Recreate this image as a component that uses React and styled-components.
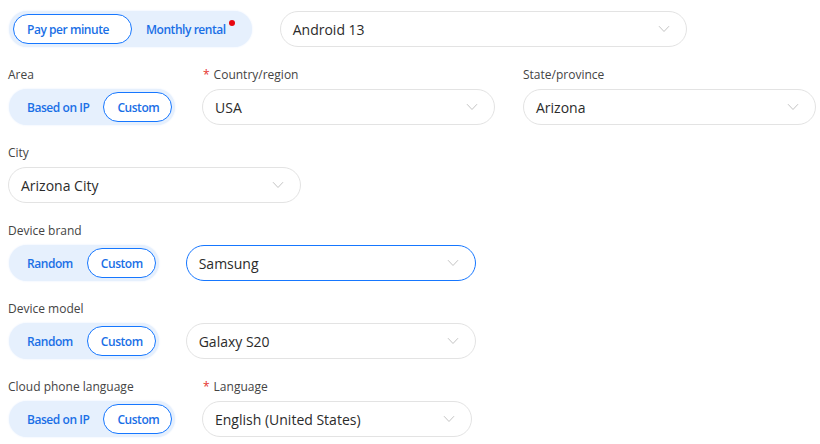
import React from "react";
import styled, { createGlobalStyle } from "styled-components";

const Global = createGlobalStyle`
  body {
    margin: 0;
    background: #fff;
    font-family: "Open Sans", "Noto Sans", sans-serif;
  }
`;

const Page = styled.div`
  width: 820px;
  height: 444px;
  box-sizing: border-box;
  padding: 11px 8px 0 8px;
  display: flex;
  flex-direction: column;
  gap: 18px;
  overflow: hidden;
`;

const Row = styled.div`
  display: flex;
  align-items: flex-end;
  gap: ${(p) => p.$gap ?? 28}px;
`;

const Field = styled.div`
  display: flex;
  flex-direction: column;
  gap: 4px;
  width: ${(p) => (p.$width ? `${p.$width}px` : "auto")};
  flex-shrink: 0;
`;

const Label = styled.div`
  height: 20px;
  line-height: 20px;
  font-size: 12px;
  color: #444;
  white-space: nowrap;
  padding-left: ${(p) => (p.$pad ? 1 : 0)}px;
`;

const Star = styled.span`
  color: #e5322d;
  margin-right: 4px;
`;

const Segmented = styled.div`
  display: inline-flex;
  align-items: center;
  height: 36px;
  box-sizing: border-box;
  padding: 3px 3px 3px 4px;
  margin-left: 1px;
  background: #e6f0fd;
  border-radius: 18px;
  box-shadow: 0 0 2px rgba(22, 119, 255, 0.12);
  width: max-content;
`;

const SegButton = styled.div`
  position: relative;
  height: 30px;
  box-sizing: border-box;
  display: flex;
  align-items: center;
  padding: 0 ${(p) => (p.$wide ? 22 : p.$active ? 12 : 13)}px 0 13px;
  border-radius: 15px;
  font-size: 12px;
  font-weight: 600;
  letter-spacing: -0.45px;
  color: #1a6fe6;
  white-space: nowrap;
  background: ${(p) => (p.$active ? "#fff" : "transparent")};
  border: 1px solid ${(p) => (p.$active ? "#1677ff" : "transparent")};
`;

const Dot = styled.span`
  position: absolute;
  top: 5px;
  right: 13px;
  width: 6px;
  height: 6px;
  border-radius: 50%;
  background: #e8060f;
`;

const Select = styled.div`
  width: ${(p) => p.$width}px;
  height: 36px;
  box-sizing: border-box;
  display: flex;
  align-items: center;
  justify-content: space-between;
  padding: 0 16px 0 12px;
  border: 1px solid ${(p) => (p.$focused ? "#1677ff" : "#e3e3e3")};
  border-radius: 18px;
  background: #fff;
  font-size: 14px;
  color: #2b2b2b;
  white-space: nowrap;
`;

const Chevron = () => (
  <svg width="12" height="8" viewBox="0 0 12 8" fill="none">
    <path d="M1 1.2 L6 6.5 L11 1.2" stroke="#c4c4c4" strokeWidth="1" />
  </svg>
);

const Dropdown = ({ value, width, focused }) => (
  <Select $width={width} $focused={focused}>
    <span>{value}</span>
    <Chevron />
  </Select>
);

const Toggle = ({ items, active, dot, wide }) => (
  <Segmented>
    {items.map((it, i) => (
      <SegButton key={it} $active={i === active} $wide={wide}>
        {it}
        {dot === i && <Dot />}
      </SegButton>
    ))}
  </Segmented>
);

export default function App() {
  return (
    <>
      <Global />
      <Page>
        <Row>
          <Toggle items={["Pay per minute", "Monthly rental"]} active={0} dot={1} wide />
          <Dropdown value="Android 13" width={407} />
        </Row>

        <Row $gap={0}>
          <Field $width={194}>
            <Label>Area</Label>
            <Toggle items={["Based on IP", "Custom"]} active={1} />
          </Field>
          <Field $width={321}>
            <Label $pad>
              <Star>*</Star>Country/region
            </Label>
            <Dropdown value="USA" width={293} />
          </Field>
          <Field>
            <Label>State/province</Label>
            <Dropdown value="Arizona" width={293} />
          </Field>
        </Row>

        <Row>
          <Field>
            <Label>City</Label>
            <Dropdown value="Arizona City" width={293} />
          </Field>
        </Row>

        <Row>
          <Field>
            <Label>Device brand</Label>
            <Row $gap={27}>
              <Toggle items={["Random", "Custom"]} active={1} />
              <Dropdown value="Samsung" width={290} focused />
            </Row>
          </Field>
        </Row>

        <Row>
          <Field>
            <Label>Device model</Label>
            <Row $gap={27}>
              <Toggle items={["Random", "Custom"]} active={1} />
              <Dropdown value="Galaxy S20" width={290} />
            </Row>
          </Field>
        </Row>

        <Row $gap={0}>
          <Field $width={194}>
            <Label>Cloud phone language</Label>
            <Toggle items={["Based on IP", "Custom"]} active={1} />
          </Field>
          <Field>
            <Label $pad>
              <Star>*</Star>Language
            </Label>
            <Dropdown value="English (United States)" width={270} />
          </Field>
        </Row>
      </Page>
    </>
  );
}
